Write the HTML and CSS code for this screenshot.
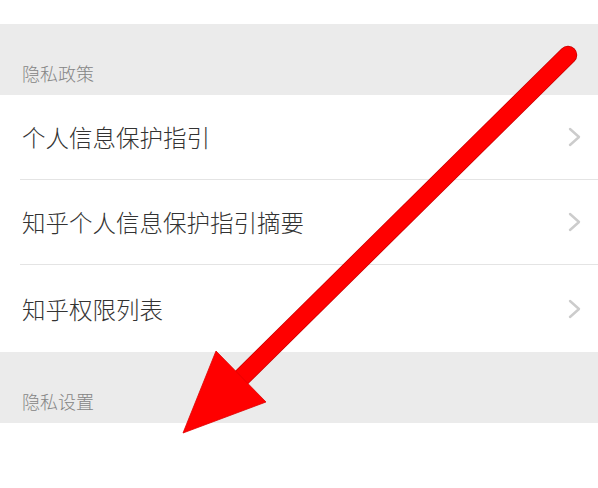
FILE: index.html
```html
<!DOCTYPE html>
<html lang="zh">
<head>
<meta charset="utf-8">
<link rel="stylesheet" href="styles.css">
</head>
<body>
<div class="page">
  <div class="top"></div>
  <div class="section-head">隐私政策</div>
  <ul class="list">
    <li class="row"><span>个人信息保护指引</span><svg class="chev" viewBox="0 0 14 20"><path d="M2 2 L11 10 L2 18" /></svg></li>
    <li class="row"><span>知乎个人信息保护指引摘要</span><svg class="chev" viewBox="0 0 14 20"><path d="M2 2 L11 10 L2 18" /></svg></li>
    <li class="row last"><span>知乎权限列表</span><svg class="chev" viewBox="0 0 14 20"><path d="M2 2 L11 10 L2 18" /></svg></li>
  </ul>
  <div class="section-head">隐私设置</div>
  <div class="bottom"></div>
  <svg class="arrow" viewBox="0 0 598 488" width="598" height="488">
    <line x1="568" y1="55" x2="236" y2="383" stroke="#c80000" stroke-width="18.5" stroke-linecap="round"/>
    <line x1="568" y1="55" x2="236" y2="383" stroke="#ff0000" stroke-width="17" stroke-linecap="round"/>
    <polygon points="216,351 266,402 183,433" fill="#ff0000" stroke="#e00000" stroke-width="0.8"/>
  </svg>
</div>
</body>
</html>
```
FILE: styles.css
```css
html, body {
  margin: 0;
  padding: 0;
  background: #ffffff;
}
.page {
  position: relative;
  width: 598px;
  height: 488px;
  overflow: hidden;
  font-family: "Noto Sans CJK SC", "Noto Sans", sans-serif;
}
.top {
  height: 24px;
  background: #ffffff;
}
.section-head {
  height: 71px;
  background: #ebebeb;
  box-sizing: border-box;
  padding: 0 0 10px 22px;
  display: flex;
  align-items: flex-end;
  font-size: 18px;
  font-weight: 300;
  line-height: 24px;
  color: #858585;
}
.list {
  list-style: none;
  margin: 0;
  padding: 0 0 0 20px;
  background: #ffffff;
}
.row {
  height: 85px;
  box-sizing: border-box;
  border-bottom: 1.5px solid #e4e4e4;
  display: flex;
  align-items: center;
  justify-content: space-between;
  padding: 0 16px 0 2px;
  font-size: 23.5px;
  font-weight: 300;
  color: #333333;
}
.row.last {
  height: 87px;
  border-bottom: none;
}
.chev {
  width: 14px;
  height: 20px;
  fill: none;
  stroke: #cccccc;
  stroke-width: 2.4;
  stroke-linecap: round;
  stroke-linejoin: round;
}
.bottom {
  height: 65px;
  background: #ffffff;
}
.arrow {
  position: absolute;
  left: 0;
  top: 0;
}
```
